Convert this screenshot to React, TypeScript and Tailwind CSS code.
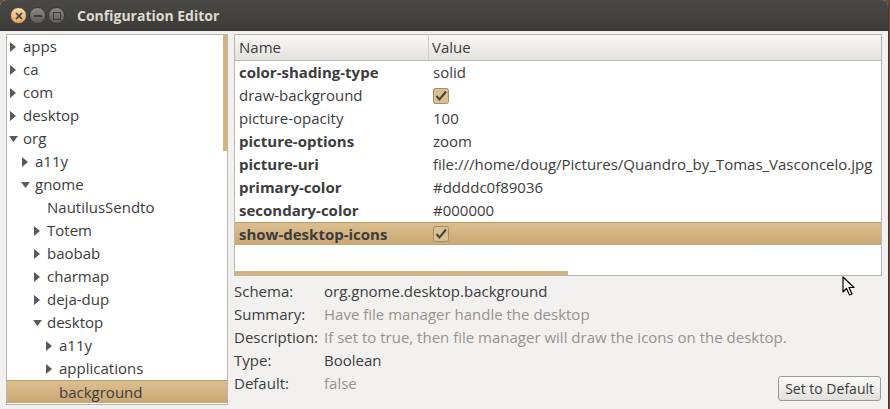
const tree = [
  { label: "apps", level: 0, arrow: "right" },
  { label: "ca", level: 0, arrow: "right" },
  { label: "com", level: 0, arrow: "right" },
  { label: "desktop", level: 0, arrow: "right" },
  { label: "org", level: 0, arrow: "down" },
  { label: "a11y", level: 1, arrow: "right" },
  { label: "gnome", level: 1, arrow: "down" },
  { label: "NautilusSendto", level: 2, arrow: "none" },
  { label: "Totem", level: 2, arrow: "right" },
  { label: "baobab", level: 2, arrow: "right" },
  { label: "charmap", level: 2, arrow: "right" },
  { label: "deja-dup", level: 2, arrow: "right" },
  { label: "desktop", level: 2, arrow: "down" },
  { label: "a11y", level: 3, arrow: "right" },
  { label: "applications", level: 3, arrow: "right" },
  { label: "background", level: 3, arrow: "none", selected: true },
];

const keys = [
  { name: "color-shading-type", value: "solid", bold: true },
  { name: "draw-background", value: "check", bold: false },
  { name: "picture-opacity", value: "100", bold: false },
  { name: "picture-options", value: "zoom", bold: true },
  { name: "picture-uri", value: "file:///home/doug/Pictures/Quandro_by_Tomas_Vasconcelo.jpg", bold: true },
  { name: "primary-color", value: "#ddddc0f89036", bold: true },
  { name: "secondary-color", value: "#000000", bold: true },
  { name: "show-desktop-icons", value: "check", bold: true, selected: true },
];

const details = [
  { label: "Schema:", value: "org.gnome.desktop.background", dim: false },
  { label: "Summary:", value: "Have file manager handle the desktop", dim: true },
  { label: "Description:", value: "If set to true, then file manager will draw the icons on the desktop.", dim: true },
  { label: "Type:", value: "Boolean", dim: false },
  { label: "Default:", value: "false", dim: true },
];

const indent = ["pl-[2px]", "pl-[14px]", "pl-[26px]", "pl-[38px]"];

function Arrow({ dir }: { dir: string }) {
  if (dir === "right")
    return (
      <svg width="14" height="12" viewBox="0 0 14 12">
        <path d="M1 1 L7 6 L1 11 Z" fill="#5a5a5a" />
      </svg>
    );
  if (dir === "down")
    return (
      <svg width="14" height="12" viewBox="0 0 14 12">
        <path d="M0 3 L9 3 L4.5 9 Z" fill="#5a5a5a" />
      </svg>
    );
  return <span className="inline-block w-[14px]" />;
}

function Check() {
  return (
    <svg width="16" height="16" viewBox="0 0 16 16">
      <rect x="0.5" y="0.5" width="15" height="15" rx="2" fill="#d8bf96" stroke="#a58a62" />
      <path d="M3.5 8 L6.5 11.5 L13 3.5" fill="none" stroke="#4a4237" strokeWidth="2" />
    </svg>
  );
}

function TitleButton({ kind }: { kind: string }) {
  if (kind === "close")
    return (
      <div className="w-[17px] h-[17px] rounded-full bg-gradient-to-b from-[#f7d9ad] to-[#e0a663] border border-[#5a4a36] flex items-center justify-center">
        <svg width="8" height="8" viewBox="0 0 8 8">
          <path d="M1 1 L7 7 M7 1 L1 7" stroke="#3c3b37" strokeWidth="1.6" />
        </svg>
      </div>
    );
  return (
    <div className="w-[17px] h-[17px] rounded-full bg-gradient-to-b from-[#8c8a85] to-[#5c5b56] border border-[#3a3935] flex items-center justify-center">
      {kind === "min" ? (
        <div className="w-[8px] h-[2px] bg-[#3c3b37]" />
      ) : (
        <div className="w-[8px] h-[8px] border-[1.5px] border-[#3c3b37]" />
      )}
    </div>
  );
}

export default function App() {
  return (
    <div
      className="w-[890px] h-[409px] bg-[#6b4a2f] overflow-hidden text-[#3c3c3c] text-[15px]"
      style={{ fontFamily: '"Open Sans", "DejaVu Sans", sans-serif' }}
    >
      <div className="w-[889px] h-[409px] rounded-t-[6px] overflow-hidden flex flex-col bg-[#f2f1f0] border-r border-[#3c3b37]">
        {/* title bar */}
        <div className="h-[31px] shrink-0 bg-gradient-to-b from-[#4a4945] to-[#3c3b37] flex items-center pl-[10px]">
          <div className="flex gap-[2px]">
            <TitleButton kind="close" />
            <TitleButton kind="min" />
            <TitleButton kind="max" />
          </div>
          <span className="ml-[12px] font-bold text-[14px] text-[#dfdbd2] leading-none">Configuration Editor</span>
        </div>

        <div className="flex-1 flex px-[6px] pt-[3px] pb-[4px] gap-[6px] border-b border-[#a9a6a2]">
          {/* tree */}
          <div className="w-[222px] shrink-0 h-[371px] bg-white border border-[#b8b5b2] relative overflow-hidden">
            <div className="flex flex-col">
              {tree.map((t, i) => (
                <div
                  key={i}
                  className={
                    "h-[23px] flex items-center leading-none " +
                    indent[t.level] +
                    (t.selected ? " bg-gradient-to-b from-[#dcbf90] to-[#caa672] border-t border-[#b99a69]" : "")
                  }
                >
                  <Arrow dir={t.arrow} />
                  <span>{t.label}</span>
                </div>
              ))}
            </div>
            <div className="absolute right-0 top-0 w-[4px] h-[116px] bg-[#d5b37f]" />
          </div>

          {/* right side */}
          <div className="flex-1 min-w-0 flex flex-col">
            <div className="h-[242px] bg-white border border-[#b8b5b2] relative overflow-hidden">
              <div className="h-[26px] flex bg-gradient-to-b from-[#f8f7f6] to-[#e4e2df] border-b border-[#bcbab7] leading-none">
                <div className="w-[194px] pl-[4px] flex items-center border-r border-[#cfcdca]">Name</div>
                <div className="pl-[3px] flex items-center">Value</div>
              </div>
              {keys.map((k, i) => (
                <div
                  key={i}
                  className={
                    "h-[23px] flex items-center leading-none whitespace-nowrap" +
                    (k.selected ? " bg-gradient-to-b from-[#dcbf90] to-[#caa672] border-t border-[#b99a69]" : "")
                  }
                >
                  <div className={"w-[194px] pl-[4px] " + (k.bold ? "font-bold" : "")}>{k.name}</div>
                  <div className="pl-[4px] flex items-center">{k.value === "check" ? <Check /> : k.value}</div>
                </div>
              ))}
              <div className="absolute left-0 bottom-0 w-[333px] h-[4px] bg-[#d5b37f]" />
            </div>

            <div className="flex-1 flex pt-[4px]">
              <div className="flex-1 min-w-0 flex flex-col">
                {details.map((d, i) => (
                  <div key={i} className="h-[23px] flex items-center leading-none whitespace-nowrap">
                    <div className="w-[90px] shrink-0">{d.label}</div>
                    <div className={d.dim ? "text-[#97928d]" : ""}>{d.value}</div>
                  </div>
                ))}
              </div>
              <div className="shrink-0 flex items-end pb-[4px] pr-[1px]">
                <button className="h-[25px] px-[6px] rounded-[3px] border border-[#9e9b97] bg-gradient-to-b from-[#fafaf9] to-[#e2e0dd] leading-none text-[#3c3c3c] text-[14px] whitespace-nowrap">
                  Set to Default
                </button>
              </div>
            </div>
          </div>
        </div>
      </div>

      {/* mouse pointer */}
      <svg className="absolute left-[842px] top-[276px]" width="14" height="21" viewBox="0 0 14 21">
        <path d="M1 1 L1 16 L4.5 12.5 L7.5 19 L10 18 L7 11.5 L12 11.5 Z" fill="#fff" stroke="#000" strokeWidth="1.2" strokeLinejoin="round" />
      </svg>
    </div>
  );
}
